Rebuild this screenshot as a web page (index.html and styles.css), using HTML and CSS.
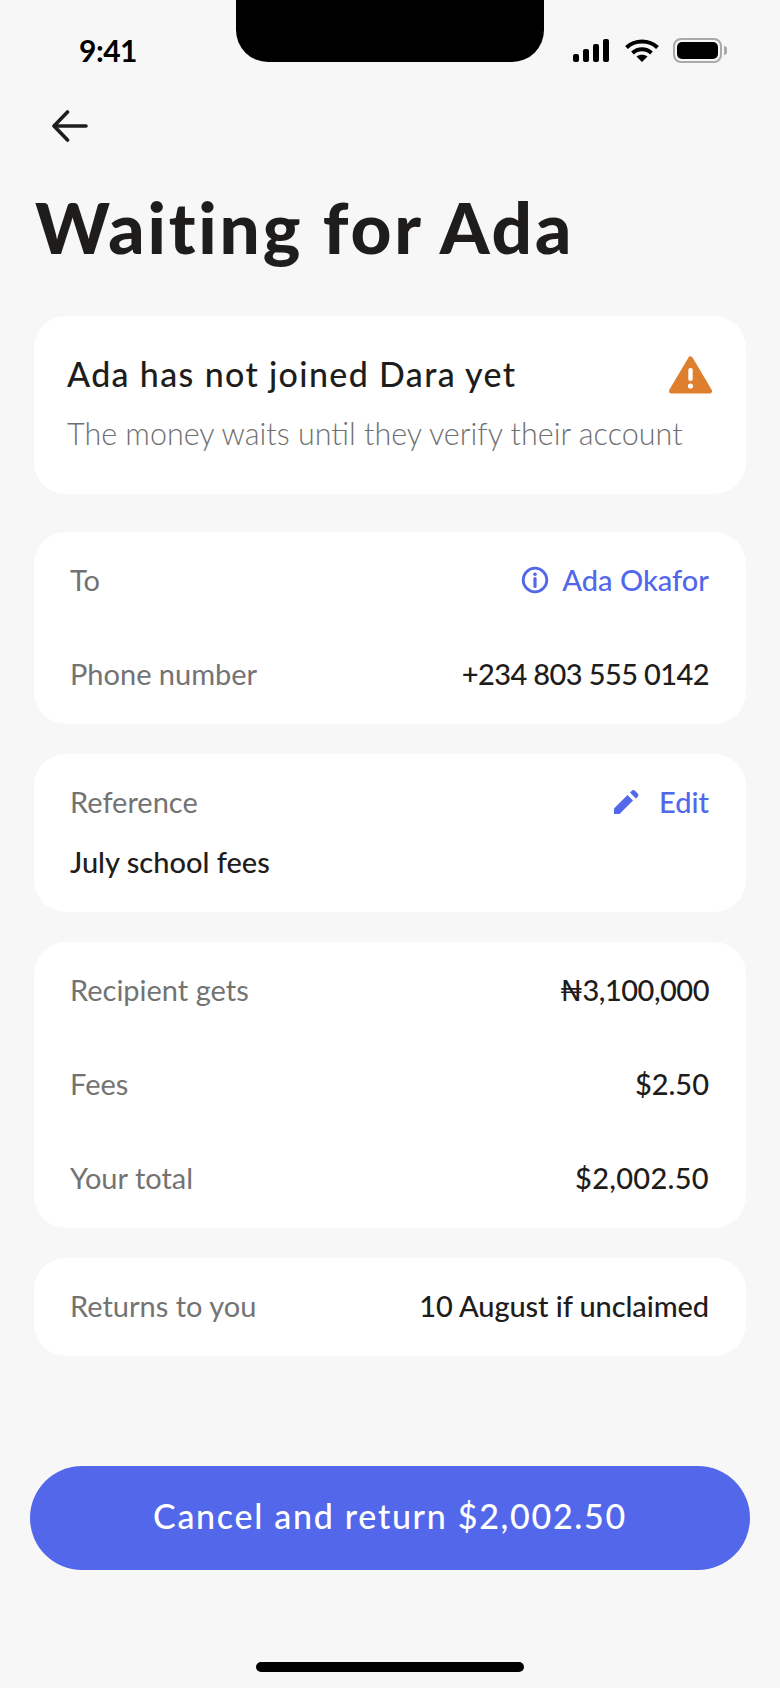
FILE: index.html
```html
<!DOCTYPE html>
<html lang="en">
<head>
  <meta charset="UTF-8" />
  <meta name="viewport" content="width=device-width, initial-scale=1.0"/>
  <title>Waiting for Ada</title>
  <link rel="stylesheet" href="styles.css">
</head>
<body>
  <div class="screen">
    <div class="notch"></div>

    <header class="status-bar">
      <span class="time">9:41</span>
      <div class="status-icons">
        <svg class="icon-signal" width="36" height="23" viewBox="0 0 36 23" fill="#000">
          <rect x="0" y="15" width="6" height="8" rx="2"/>
          <rect x="10" y="10" width="6" height="13" rx="2"/>
          <rect x="20" y="5" width="6" height="18" rx="2"/>
          <rect x="30" y="0" width="6" height="23" rx="2"/>
        </svg>
        <svg class="icon-wifi" width="34" height="23" viewBox="0 0 34 23" fill="none" stroke="#000" stroke-width="4">
          <path d="M1.5 8.5C10 0.5 24 0.5 32.5 8.5"/>
          <path d="M7.5 14C13 9 21 9 26.5 14"/>
          <path d="M11.5 17.5L17 23L22.5 17.5C19.5 15 14.5 15 11.5 17.5Z" fill="#000" stroke="none"/>
        </svg>
        <div class="battery">
          <div class="battery-body"><div class="battery-fill"></div></div>
          <div class="battery-nub"></div>
        </div>
      </div>
    </header>

    <button class="back" aria-label="Back">
      <svg width="36" height="32" viewBox="0 0 36 32" fill="none" stroke="#1f1d1c" stroke-width="3.6" stroke-linecap="round" stroke-linejoin="round">
        <path d="M34 16H2.5"/>
        <path d="M15.5 2L2 16L15.5 30"/>
      </svg>
    </button>

    <h1>Waiting for Ada</h1>

    <main class="cards">
      <section class="card notice">
        <div class="notice-top">
          <h2>Ada has not joined Dara yet</h2>
          <svg class="warn" width="43" height="38" viewBox="0 0 43 38">
            <path d="M21.5 3L40.5 35H2.5Z" fill="#de7f2e" stroke="#de7f2e" stroke-width="5" stroke-linejoin="round"/>
            <rect x="19.3" y="12" width="4.4" height="13" rx="2" fill="#fff"/>
            <circle cx="21.5" cy="30" r="2.6" fill="#fff"/>
          </svg>
        </div>
        <p>The money waits until they verify their account</p>
      </section>

      <section class="card rows">
        <div class="row">
          <span class="label">To</span>
          <span class="value link">
            <svg width="28" height="28" viewBox="0 0 28 28" fill="none" stroke="#5367eb" stroke-width="2.8">
              <circle cx="14" cy="14" r="11.8"/>
              <path d="M14 12.5V20.5" stroke-width="3.2" stroke-linecap="round"/>
              <circle cx="14" cy="8.2" r="1.8" fill="#5367eb" stroke="none"/>
            </svg>
            Ada Okafor
          </span>
        </div>
        <div class="row">
          <span class="label">Phone number</span>
          <span class="value phone">+234 803 555 0142</span>
        </div>
      </section>

      <section class="card reference">
        <div class="reference-top">
          <span class="label">Reference</span>
          <span class="value link edit">
            <svg width="25" height="24" viewBox="0 0 25 24" fill="#5367eb">
              <path d="M0 24V18.5L13.5 5L19 10.500L5.500 24Z"/>
              <path d="M16 2.500L17.500 1C18.800 -0.200 20 -0.200 21.200 1L23.500 3.300C24.700 4.500 24.700 5.700 23.500 7L21.800 8.500Z"/>
            </svg>
            Edit
          </span>
        </div>
        <div class="value">July school fees</div>
      </section>

      <section class="card rows">
        <div class="row">
          <span class="label">Recipient gets</span>
          <span class="value naira">₦3,100,000</span>
        </div>
        <div class="row">
          <span class="label">Fees</span>
          <span class="value">$2.50</span>
        </div>
        <div class="row">
          <span class="label">Your total</span>
          <span class="value total">$2,002.50</span>
        </div>
      </section>

      <section class="card rows">
        <div class="row">
          <span class="label">Returns to you</span>
          <span class="value unclaimed">10 August if unclaimed</span>
        </div>
      </section>
    </main>

    <button class="cta">Cancel and return $2,002.50</button>

    <div class="home-bar"></div>
  </div>
</body>
</html>
```

FILE: styles.css
```css
body {
  margin: 0;
  background-color: #f7f7f7;
  font-family: Lato, "Noto Sans", sans-serif;
  color: #1f1d1c;
}

.screen {
  position: relative;
  width: 780px;
  height: 1688px;
  overflow: hidden;
  display: flex;
  flex-direction: column;
}

.notch {
  position: absolute;
  top: 0;
  left: 236px;
  width: 308px;
  height: 62px;
  background-color: #000;
  border-radius: 0 0 32px 32px;
}

.status-bar {
  height: 66px;
  padding: 34px 53px 0 79px;
  box-sizing: border-box;
  display: flex;
  justify-content: space-between;
  align-items: flex-start;
  flex-shrink: 0;
}

.time {
  font-size: 30px;
  line-height: 32px;
  font-weight: 700;
  letter-spacing: -0.5px;
  color: #000;
}

.status-icons {
  display: flex;
  align-items: center;
  gap: 16px;
  padding-top: 4px;
}

.battery {
  margin-left: -2px;
  display: flex;
  align-items: center;
  gap: 2px;
}

.battery-body {
  width: 49px;
  height: 25px;
  box-sizing: border-box;
  padding: 2px;
  border: 2px solid #aaa;
  border-radius: 8px;
}

.battery-fill {
  height: 100%;
  background-color: #000;
  border-radius: 5px;
}

.battery-nub {
  width: 3px;
  height: 9px;
  background-color: #aaa;
  border-radius: 0 3px 3px 0;
}

.back {
  margin: 44px 0 0 52px;
  padding: 0;
  width: 36px;
  height: 32px;
  border: none;
  background: none;
  flex-shrink: 0;
}

.back svg {
  display: block;
}

h1 {
  margin: 42px 0 0 35px;
  font-size: 71px;
  line-height: 86px;
  font-weight: 900;
  letter-spacing: 2.8px;
}

.cards {
  margin: 46px 34px 0;
  display: flex;
  flex-direction: column;
  gap: 30px;
}

.card {
  background-color: #fff;
  border-radius: 32px;
}

.notice {
  height: 178px;
  box-sizing: border-box;
  padding: 39px 34px 0 33px;
  margin-bottom: 8px;
}

.notice-top {
  display: flex;
  justify-content: space-between;
  align-items: center;
  height: 38px;
}

.warn {
  margin-top: 2px;
}

h2 {
  margin: 0;
  font-size: 34px;
  line-height: 38px;
  font-weight: 500;
  letter-spacing: 1.35px;
}

.notice p {
  margin: 21px 0 0;
  font-size: 30.5px;
  line-height: 38px;
  font-weight: 300;
  color: #707070;
}

.rows {
  padding: 2px 37px 2px 36px;
}

.row {
  height: 94px;
  box-sizing: border-box;
  padding-bottom: 2px;
  display: flex;
  justify-content: space-between;
  align-items: center;
}

.label,
.value {
  font-size: 29px;
  line-height: 34px;
}

.label {
  color: #737373;
}

.value {
  font-weight: 500;
}

.phone {
  letter-spacing: -0.6px;
}

.naira {
  letter-spacing: -0.5px;
}

.total {
  letter-spacing: 0.3px;
}

.unclaimed {
  letter-spacing: -0.1px;
}

.link {
  color: #5367eb;
  display: flex;
  align-items: center;
  gap: 13px;
}

.edit {
  gap: 20px;
}

.reference {
  height: 158px;
  box-sizing: border-box;
  padding: 31px 37px 0 36px;
}

.reference-top {
  display: flex;
  justify-content: space-between;
  align-items: center;
  margin-bottom: 26px;
}

.cta {
  margin: 110px 30px 0;
  width: 720px;
  height: 104px;
  padding-bottom: 6px;
  flex-shrink: 0;
  border: none;
  border-radius: 52px;
  background-color: #5367eb;
  color: #fff;
  font-family: inherit;
  font-size: 34px;
  font-weight: 500;
  letter-spacing: 1.7px;
}

.home-bar {
  margin: 92px 0 0 256px;
  width: 268px;
  height: 10px;
  flex-shrink: 0;
  background-color: #000;
  border-radius: 5px;
}
```
